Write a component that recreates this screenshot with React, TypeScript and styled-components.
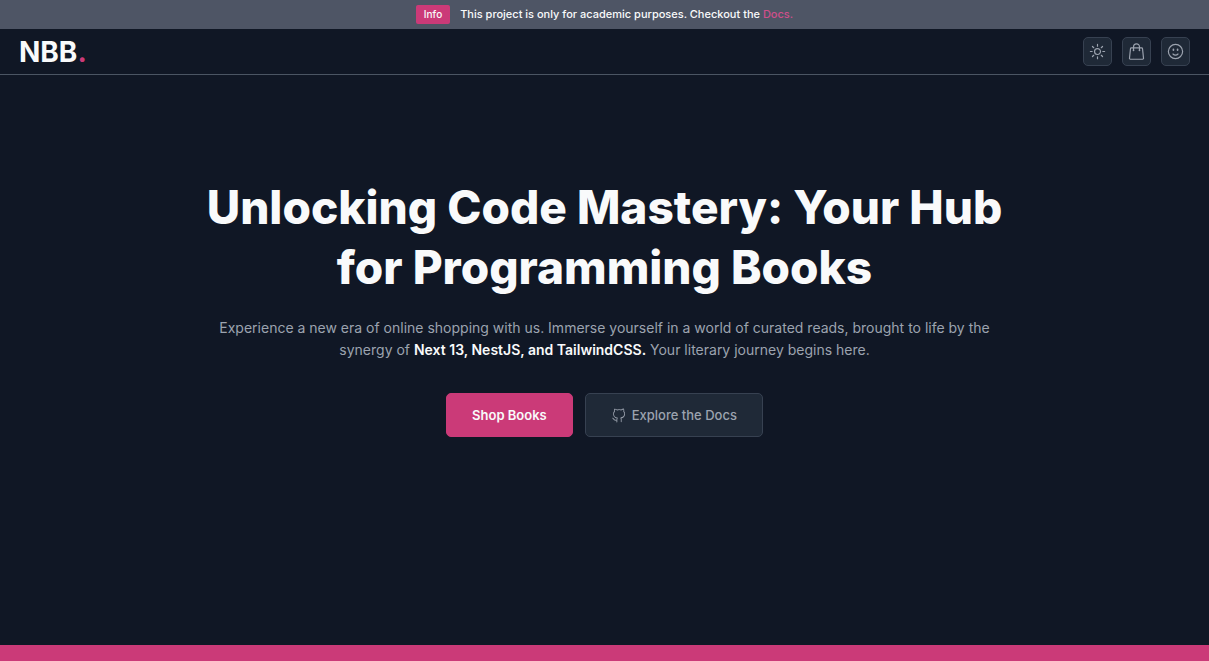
import React from "react";
import styled, { createGlobalStyle } from "styled-components";
import {
  HiOutlineFaceSmile,
  HiOutlineShoppingBag,
  HiOutlineSun,
} from "react-icons/hi2";
import { VscGithubAlt } from "react-icons/vsc";

const GlobalStyle = createGlobalStyle`
  *, *::before, *::after { box-sizing: border-box; }
  body {
    margin: 0;
    background: #101725;
    color: #f9fafb;
    font-family: Inter, "Liberation Sans", sans-serif;
    -webkit-font-smoothing: antialiased;
  }
  h1, p { margin: 0; }
`;

const Page = styled.div`
  display: flex;
  flex-direction: column;
  min-height: 100vh;
`;

const Banner = styled.div`
  display: flex;
  align-items: center;
  justify-content: center;
  gap: 10px;
  padding: 5px 16px;
  background: #4e5565;
  font-size: 11px;
  font-weight: 500;
  line-height: 19px;
`;

const Badge = styled.span`
  padding: 0 8px;
  border-radius: 2px;
  background: #cb3a78;
  font-size: 10px;
`;

const BannerLink = styled.a`
  color: #cf4f8b;
  text-decoration: none;
`;

const Header = styled.header`
  display: flex;
  align-items: center;
  justify-content: space-between;
  padding: 8px 19px;
  border-bottom: 1px solid #4b5563;
`;

const Logo = styled.a`
  color: #f9fafb;
  font-size: 28px;
  font-weight: 700;
  line-height: 28px;
  text-decoration: none;
`;

const LogoDot = styled.span`
  color: #cb3a78;
`;

const Actions = styled.nav`
  display: flex;
  gap: 10px;
`;

const IconButton = styled.button`
  display: grid;
  place-items: center;
  width: 29px;
  height: 29px;
  padding: 0;
  border: 1px solid #374151;
  border-radius: 5px;
  background: #1f2937;
  color: #9ca3af;
  font-size: 19px;
`;

const Hero = styled.main`
  flex: 1;
  display: flex;
  flex-direction: column;
  align-items: center;
  padding: 102px 24px 64px;
  text-align: center;
`;

const Title = styled.h1`
  max-width: 820px;
  font-size: 46px;
  font-weight: 800;
  line-height: 60px;
`;

const Lead = styled.p`
  max-width: 820px;
  margin-top: 20px;
  color: #9ca3af;
  font-size: 14px;
  line-height: 22px;

  strong { color: #f9fafb; font-weight: 600; }
`;

const Buttons = styled.div`
  display: flex;
  gap: 12px;
  margin-top: 32px;
`;

const Button = styled.button<{ $primary?: boolean }>`
  display: inline-flex;
  align-items: center;
  gap: 6px;
  height: 44px;
  padding: 0 25px;
  border: 1px solid ${(p) => (p.$primary ? "#cb3a78" : "#374151")};
  border-radius: 5px;
  background: ${(p) => (p.$primary ? "#cb3a78" : "#1f2937")};
  color: ${(p) => (p.$primary ? "#f9fafb" : "#9ca3af")};
  font-family: inherit;
  font-size: 13px;
  font-weight: ${(p) => (p.$primary ? 600 : 500)};

  svg { font-size: 15px; }
`;

const BottomBand = styled.div`
  height: 16px;
  background: #cb3a78;
`;

export default function App() {
  return (
    <>
      <GlobalStyle />
      <Page>
        <Banner>
          <Badge>Info</Badge>
          <span>
            This project is only for academic purposes. Checkout the{" "}
            <BannerLink href="#docs">Docs.</BannerLink>
          </span>
        </Banner>
        <Header>
          <Logo href="#">NBB<LogoDot>.</LogoDot></Logo>
          <Actions aria-label="Account and settings">
            <IconButton type="button" aria-label="Toggle theme"><HiOutlineSun /></IconButton>
            <IconButton type="button" aria-label="Shopping bag"><HiOutlineShoppingBag /></IconButton>
            <IconButton type="button" aria-label="Account"><HiOutlineFaceSmile /></IconButton>
          </Actions>
        </Header>
        <Hero>
          <Title>Unlocking Code Mastery: Your Hub for Programming Books</Title>
          <Lead>
            Experience a new era of online shopping with us. Immerse yourself in a world of
            curated reads, brought to life by the synergy of{" "}
            <strong>Next 13, NestJS, and TailwindCSS.</strong> Your literary journey begins here.
          </Lead>
          <Buttons>
            <Button type="button" $primary>Shop Books</Button>
            <Button type="button"><VscGithubAlt />Explore the Docs</Button>
          </Buttons>
        </Hero>
        <BottomBand />
      </Page>
    </>
  );
}
